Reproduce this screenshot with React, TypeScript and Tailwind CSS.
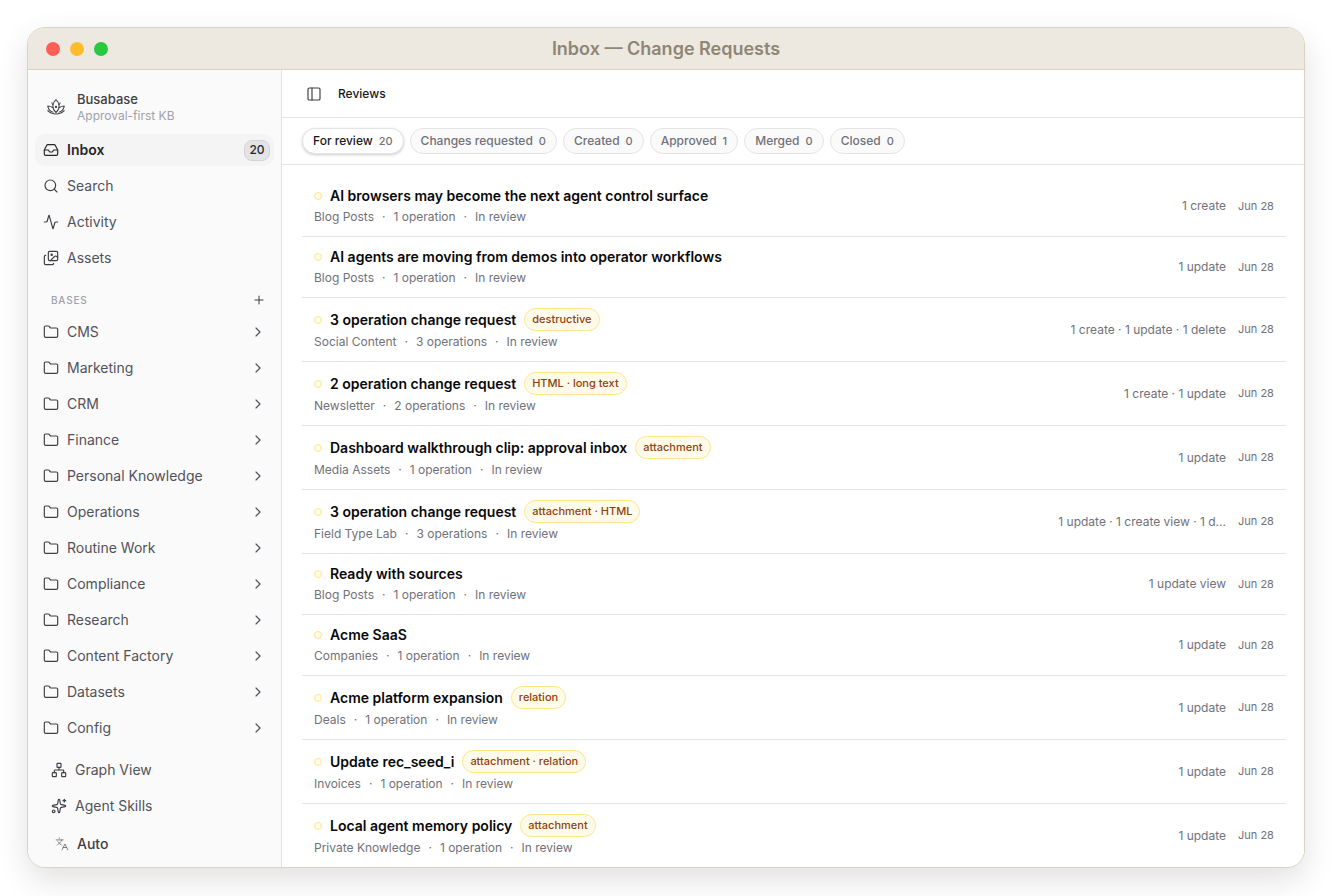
import React from "react";
import {
  Activity,
  ChevronRight,
  Folder,
  Images,
  Inbox,
  Languages,
  Network,
  PanelLeft,
  Plus,
  Search,
  Sparkles,
} from "lucide-react";

/* ---- Data ---- */

const TABS = [
  { label: "For review", count: 20, active: true },
  { label: "Changes requested", count: 0 },
  { label: "Created", count: 0 },
  { label: "Approved", count: 1 },
  { label: "Merged", count: 0 },
  { label: "Closed", count: 0 },
];

const BASES = [
  "CMS",
  "Marketing",
  "CRM",
  "Finance",
  "Personal Knowledge",
  "Operations",
  "Routine Work",
  "Compliance",
  "Research",
  "Content Factory",
  "Datasets",
  "Config",
];

type Row = {
  title: string;
  badge?: string;
  base: string;
  ops: string;
  summary: string;
};

const ROWS: Row[] = [
  { title: "AI browsers may become the next agent control surface", base: "Blog Posts", ops: "1 operation", summary: "1 create" },
  { title: "AI agents are moving from demos into operator workflows", base: "Blog Posts", ops: "1 operation", summary: "1 update" },
  { title: "3 operation change request", badge: "destructive", base: "Social Content", ops: "3 operations", summary: "1 create · 1 update · 1 delete" },
  { title: "2 operation change request", badge: "HTML · long text", base: "Newsletter", ops: "2 operations", summary: "1 create · 1 update" },
  { title: "Dashboard walkthrough clip: approval inbox", badge: "attachment", base: "Media Assets", ops: "1 operation", summary: "1 update" },
  { title: "3 operation change request", badge: "attachment · HTML", base: "Field Type Lab", ops: "3 operations", summary: "1 update · 1 create view · 1 d..." },
  { title: "Ready with sources", base: "Blog Posts", ops: "1 operation", summary: "1 update view" },
  { title: "Acme SaaS", base: "Companies", ops: "1 operation", summary: "1 update" },
  { title: "Acme platform expansion", badge: "relation", base: "Deals", ops: "1 operation", summary: "1 update" },
  { title: "Update rec_seed_i", badge: "attachment · relation", base: "Invoices", ops: "1 operation", summary: "1 update" },
  { title: "Local agent memory policy", badge: "attachment", base: "Private Knowledge", ops: "1 operation", summary: "1 update" },
];

/* ---- Sidebar ---- */

function LotusMark() {
  return (
    <svg width="22" height="22" viewBox="0 0 24 24" fill="none" stroke="#3f3f46" strokeWidth="1.1" strokeLinecap="round" strokeLinejoin="round">
      <path d="M12 4c2.2 2 3.4 4.4 3.4 7 0 2.8-1.3 5.2-3.4 7-2.1-1.8-3.4-4.2-3.4-7 0-2.6 1.2-5 3.4-7Z" />
      <path d="M7.6 7.4c.2 1 .5 1.6 1 2.2M16.4 7.4c-.2 1-.5 1.6-1 2.2" />
      <path d="M8.8 17.6C5.6 16.8 3.6 14.4 3 11c1.6 0 3.2.4 5.4 1.6M15.2 17.6c3.2-.8 5.2-3.2 5.8-6.6-1.6 0-3.2.4-5.4 1.6" />
      <path d="M3 16c2.4 2.6 5.6 3.6 9 3.6s6.6-1 9-3.6" />
      <circle cx="12" cy="12" r=".7" fill="#3f3f46" />
    </svg>
  );
}

function NavItem({
  icon: Icon,
  label,
  active,
  count,
}: {
  icon: React.ElementType;
  label: string;
  active?: boolean;
  count?: number;
}) {
  return (
    <div
      className={[
        "flex h-8 items-center gap-2 rounded-[10px] pl-2 pr-1 text-sm",
        active ? "bg-[#f4f4f5] font-semibold text-[#27272a]" : "text-[#52525b]",
      ].join(" ")}
    >
      <Icon size={16} strokeWidth={1.75} className={active ? "text-[#27272a]" : "text-[#3f3f46]"} />
      <span className="flex-1">{label}</span>
      {count !== undefined && (
        <span className="flex h-[21px] w-[26px] items-center justify-center rounded-lg border border-[#d4d4d8] bg-[#e4e4e7] text-xs font-medium text-[#27272a]">
          {count}
        </span>
      )}
    </div>
  );
}

function Sidebar() {
  return (
    <aside className="flex w-[254px] shrink-0 flex-col border-r border-[#e4e4e7] bg-[#fafafa] px-[7px]">
      <div className="flex h-[64px] items-center gap-[10px] pl-[10px] pt-[10px]">
        <LotusMark />
        <div className="flex flex-col">
          <span className="text-[13px] leading-[17px] font-medium text-[#3f3f46]">Busabase</span>
          <span className="text-xs leading-[16px] text-[#a1a1aa]">Approval-first KB</span>
        </div>
      </div>
      <div className="flex flex-col gap-1">
        <NavItem icon={Inbox} label="Inbox" active count={20} />
        <NavItem icon={Search} label="Search" />
        <NavItem icon={Activity} label="Activity" />
        <NavItem icon={Images} label="Assets" />
      </div>
      <div className="mt-[16px] flex h-[20px] items-center justify-between pl-4 pr-[8px]">
        <span className="text-[10px] font-medium tracking-[0.08em] text-[#a1a1aa]">BASES</span>
        <Plus size={14} strokeWidth={1.75} className="text-[#3f3f46]" />
      </div>
      <div className="mt-[6px] flex flex-col gap-1">
        {BASES.map((base) => (
          <div key={base} className="flex h-8 items-center gap-2 pl-2 pr-[8px] text-sm text-[#52525b]">
            <Folder size={16} strokeWidth={1.75} className="text-[#3f3f46]" />
            <span className="flex-1">{base}</span>
            <ChevronRight size={16} strokeWidth={1.75} className="text-[#52525b]" />
          </div>
        ))}
      </div>
      <div className="mt-[10px] flex flex-col gap-1 pl-4">
        <div className="flex h-8 items-center gap-2 text-sm text-[#52525b]">
          <Network size={16} strokeWidth={1.75} className="text-[#3f3f46]" />
          Graph View
        </div>
        <div className="flex h-8 items-center gap-2 text-sm text-[#52525b]">
          <Sparkles size={16} strokeWidth={1.75} className="text-[#3f3f46]" />
          Agent Skills
        </div>
        <div className="flex h-8 items-center gap-2 pl-1 pt-[4px] text-sm font-medium text-[#3f3f46]">
          <Languages size={14} strokeWidth={1.5} className="text-[#71717a]" />
          Auto
        </div>
      </div>
    </aside>
  );
}

/* ---- Main ---- */

function ReviewRow({ row }: { row: Row }) {
  return (
    <div className="flex items-center justify-between border-b border-[#e4e4e7] px-3 py-[10px]">
      <div className="flex min-w-0 flex-col gap-[2px]">
        <div className="flex min-h-5 items-center">
          <span className="mr-2 h-2 w-2 shrink-0 rounded-full border border-[#fde68a] bg-[#fefce8]" />
          <span className="text-sm leading-5 font-semibold text-[#09090b]">{row.title}</span>
          {row.badge && (
            <span className="ml-2 flex h-[23px] items-center rounded-full border border-[#fde68a] bg-[#fffbeb] px-[7px] text-[11px] font-medium text-[#92400e]">
              {row.badge}
            </span>
          )}
        </div>
        <div className="flex items-center gap-2 text-xs leading-[18px] text-[#71717a]">
          <span>{row.base}</span>
          <span>·</span>
          <span>{row.ops}</span>
          <span>·</span>
          <span>In review</span>
        </div>
      </div>
      <div className="flex shrink-0 items-center gap-3 text-xs text-[#71717a]">
        <span>{row.summary}</span>
        <span className="w-[36px] text-[11px] whitespace-nowrap">Jun 28</span>
      </div>
    </div>
  );
}

function Main() {
  return (
    <main className="flex min-w-0 flex-1 flex-col overflow-hidden bg-white">
      <div className="flex h-[48px] shrink-0 items-center gap-4 border-b border-[#e4e4e7] px-6">
        <PanelLeft size={16} strokeWidth={1.75} className="text-[#3f3f46]" />
        <span className="text-xs font-medium text-[#18181b]">Reviews</span>
      </div>
      <div className="flex h-[47px] shrink-0 items-center gap-[6px] border-b border-[#e4e4e7] px-5">
        {TABS.map((tab) => (
          <div
            key={tab.label}
            className={[
              "flex h-[26px] items-center gap-[6px] rounded-full border px-[10px] text-xs font-medium",
              tab.active
                ? "border-[#e4e4e7] bg-white text-[#18181b] shadow-[0_1px_3px_rgba(0,0,0,0.2)]"
                : "border-[#e4e4e7] bg-[#fafafa] text-[#71717a]",
            ].join(" ")}
          >
            <span>{tab.label}</span>
            <span className="text-[11px] text-[#71717a]">{tab.count}</span>
          </div>
        ))}
      </div>
      <div className="flex flex-col pl-5 pr-[18px] pt-[11px]">
        {ROWS.map((row, i) => (
          <ReviewRow key={i} row={row} />
        ))}
      </div>
    </main>
  );
}

export default function App() {
  return (
    <div className="h-[896px] w-[1332px] overflow-hidden bg-white pl-[27px] pt-[27px] font-['Inter',sans-serif]">
      <div className="flex h-[841px] w-[1278px] flex-col overflow-hidden rounded-[18px] border border-[#d9d3c4] bg-white shadow-[0_12px_32px_rgba(0,0,0,0.12)]">
        <div className="relative flex h-[42px] shrink-0 items-center justify-center border-b border-[#d9d3c4] bg-[#ede9e1]">
          <div className="absolute left-[18px] flex gap-[10px]">
            <span className="h-[14px] w-[14px] rounded-full bg-[#ff5f57]" />
            <span className="h-[14px] w-[14px] rounded-full bg-[#febc2e]" />
            <span className="h-[14px] w-[14px] rounded-full bg-[#28c840]" />
          </div>
          <span className="text-lg font-semibold text-[#8f8674]">Inbox — Change Requests</span>
        </div>
        <div className="flex min-h-0 flex-1">
          <Sidebar />
          <Main />
        </div>
      </div>
    </div>
  );
}
